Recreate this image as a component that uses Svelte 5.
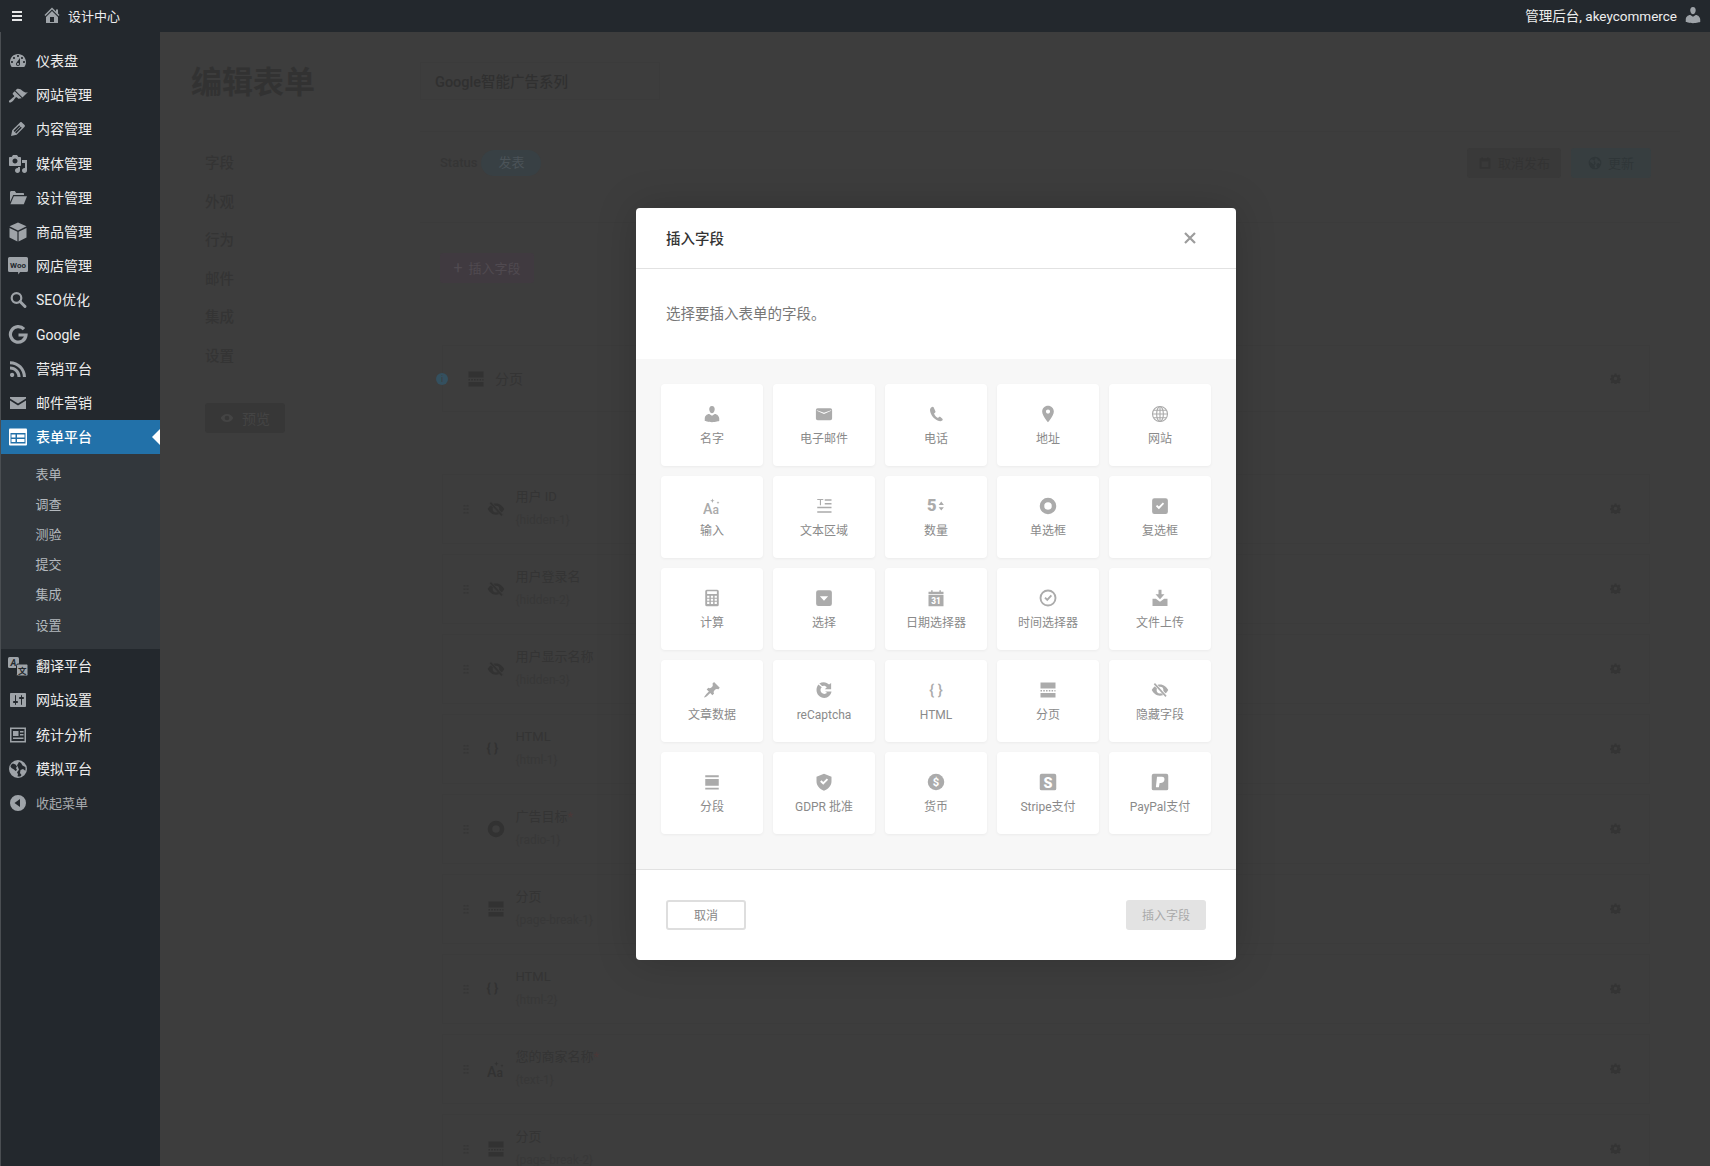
<script>
  const ic = {
    dashboard: [20, '<path fill-rule="evenodd" d="M3.76 16h12.48c1.1-1.37 1.76-3.11 1.76-5 0-4.42-3.58-8-8-8s-8 3.58-8 8c0 1.89.66 3.63 1.76 5zM10 4c.55 0 1 .45 1 1s-.45 1-1 1-1-.45-1-1 .45-1 1-1zM6 6c.55 0 1 .45 1 1s-.45 1-1 1-1-.45-1-1 .45-1 1-1zm8 0c.55 0 1 .45 1 1s-.45 1-1 1-1-.45-1-1 .45-1 1-1zm-5.37 5.55L12 7v6c0 1.1-.9 2-2 2s-2-.9-2-2c0-.57.24-1.08.63-1.45zM4 10c.55 0 1 .45 1 1s-.45 1-1 1-1-.45-1-1 .45-1 1-1zm12 0c.55 0 1 .45 1 1s-.45 1-1 1-1-.45-1-1 .45-1 1-1zm-5 3c0-.55-.45-1-1-1s-1 .45-1 1 .45 1 1 1 1-.45 1-1z"/>'],
    brush: [20, '<path d="M14.48 11.06L7.41 3.99l1.5-1.5c.5-.56 2.3-.47 3.51.32 1.21.8 1.43 1.28 2.91 2.1 1.18.64 2.45 1.26 4.45.85zm-.71.71L6.7 4.7 4.93 6.47c-.39.39-.39 1.02 0 1.41l1.06 1.06c.39.39.39 1.03 0 1.42-.6.6-1.43 1.11-2.21 1.69-.35.26-.7.53-1.01.84C1.43 13.23.4 14.98 1.2 15.8c.8.81 2.57-.23 3.92-1.58.31-.31.58-.66.85-1.02.57-.78 1.08-1.61 1.69-2.21.39-.39 1.02-.39 1.41 0l1.06 1.06c.39.39 1.02.39 1.41 0z" transform="translate(0 1.5)"/>'],
    edit: [20, '<path d="M13.89 3.39l2.71 2.72c.46.46.42 1.24.03 1.64l-8.01 8.02-5.56 1.16 1.16-5.58s7.6-7.63 7.99-8.03c.39-.39 1.22-.39 1.68.07zm-2.73 2.79l-5.59 5.61 1.11 1.11 5.54-5.65zm-2.97 8.23l5.58-5.6-1.07-1.08-5.59 5.6z"/>'],
    media: [20, '<path d="M13 11V4c0-.55-.45-1-1-1h-1.67L9 1H5L3.67 3H2c-.55 0-1 .45-1 1v7c0 .55.45 1 1 1h10c.55 0 1-.45 1-1zM7 4.5c1.38 0 2.5 1.12 2.5 2.5S8.38 9.5 7 9.5 4.5 8.38 4.5 7 5.62 4.5 7 4.5zM14 6h5v10.5c0 1.38-1.12 2.5-2.5 2.5S14 17.88 14 16.5s1.12-2.5 2.5-2.5c.17 0 .34.02.5.05V9h-3V6zm-4 8.05V13h2v3.5c0 1.38-1.12 2.5-2.5 2.5S7 17.88 7 16.5 8.12 14 9.5 14c.17 0 .34.02.5.05z"/>'],
    folder: [20, '<path d="M2 4.5C2 3.7 2.6 3 3.4 3h3.4l1.4 2H15c.6 0 1 .4 1 1v1H5.2L2 14z"/><path d="M5.8 8.2H19l-3.2 8H2.4z"/>'],
    box: [20, '<path d="M10 .5l8.500 3.800L10 8.400 1.500 4.300zM1.500 6l7.900 3.800V19.500L1.500 15.500zM18.500 6v9.500l-7.900 4V9.800z"/>'],
    woo: [20, '<path d="M1.500 1h17a1.500 1.500 0 0 1 1.500 1.500v12a1.500 1.500 0 0 1-1.500 1.500h-6.500l-1.500 2.500-.5-2.500h-8.500a1.500 1.500 0 0 1-1.500-1.500v-12a1.500 1.500 0 0 1 1.500-1.500z"/><text x="10" y="11.500" text-anchor="middle" font-size="8" font-weight="700" font-family="Roboto" fill="#23282d">Woo</text>'],
    search: [20, '<circle cx="8.500" cy="8" r="4.800" fill="none" stroke="currentColor" stroke-width="2.200"/><path d="M12 11.500l5 5" stroke="currentColor" stroke-width="3" stroke-linecap="round"/>'],
    google: [20, '<path d="M16 5.100A7.800 7.800 0 1 0 18 11H10.500" fill="none" stroke="currentColor" stroke-width="3.200"/>'],
    rss: [20, '<path d="M14.92 18H18C18 9.32 10.82 2.25 2 2.25v3.02c7.12 0 12.92 5.71 12.92 12.73zm-5.44 0h3.08C12.56 12.27 7.82 7.6 2 7.6v3.02c2 0 3.87.77 5.29 2.16C8.7 14.17 9.48 16.03 9.48 18zm-5.35-.02c1.17 0 2.13-.93 2.13-2.09 0-1.15-.96-2.09-2.13-2.09-1.18 0-2.13.94-2.13 2.09 0 1.16.95 2.09 2.13 2.09z"/>'],
    mailbar: [20, '<path d="M2 4h16v1.500l-8 5-8-5zM2 7.500l8 5 8-5V16H2z"/>'],
    form: [20, '<rect x="1" y="1.500" width="18" height="17" rx="1" fill="#fff"/><rect x="2.500" y="6" width="15" height="10.500" fill="#2271a9"/><path d="M3.500 7.500h4v3h-4zM3.500 12h4v3h-4zM9 7.500h7.500v3H9zM9 12h7.500v3H9z" fill="#fff"/>'],
    translate: [20, '<rect x="0" y="1" width="11" height="11" rx="1.500"/><text x="5.500" y="9.500" text-anchor="middle" font-size="9" font-weight="700" font-style="italic" font-family="Roboto" fill="#23282d">A</text><rect x="8.500" y="8" width="11.500" height="12" rx="1.500" stroke="#23282d"/><text x="14.200" y="17.500" text-anchor="middle" font-size="8.500" font-family="Noto Sans CJK SC" font-weight="700" fill="#23282d">文</text>'],
    settings: [20, '<path d="M18 16V4c0-.55-.45-1-1-1H3c-.55 0-1 .45-1 1v12c0 .55.45 1 1 1h14c.55 0 1-.45 1-1zM8 11h1c.55 0 1 .45 1 1s-.45 1-1 1H8v1.500c0 .28-.22.5-.5.5s-.5-.22-.5-.5V13H6c-.55 0-1-.45-1-1s.45-1 1-1h1V5.500c0-.28.22-.5.5-.5s.5.22.5.5V11zm5-2h-1c-.55 0-1-.45-1-1s.45-1 1-1h1V5.500c0-.28.22-.5.5-.5s.5.22.5.5V7h1c.55 0 1 .45 1 1s-.45 1-1 1h-1v5.500c0 .28-.22.5-.5.5s-.5-.22-.5-.5V9z"/>'],
    stats: [20, '<path fill-rule="evenodd" d="M2 2.500h16v15H2zM3.500 4v12h13V4z"/><path d="M5 6h5.500v5H5zM12 6h3.500v1.500H12zM12 9h3.500v1.500H12zM5 12.500h10.500V14H5z"/>'],
    globeFill: [20, '<path fill-rule="evenodd" d="M10 1a9 9 0 1 0 0 18 9 9 0 0 0 0-18zM5 4.500l2.500 1 1.500 2-1 1.500 1 2-1.500 1-1.500-1.500-2.500-1.500-1-1.500C2.600 6.200 3.600 5.300 5 4.500zm6-1.800l2 1.300 1.500 2.500 2.800 1.500c.3 1 .3 2.500 0 3.700l-2.300-1.700-2.500 1-.5 3 1.500 2-1 1.300c-1 .3-2 .3-3 0l.5-2-1-2 2-2.500-1-2.500-1-2 1-1.500z"/>'],
    collapse: [20, '<path fill-rule="evenodd" d="M10 2a8 8 0 1 0 0 16 8 8 0 0 0 0-16zm2 4v8L6.500 10z"/>'],
    home: [20, '<path d="M16 8.500l1.530 1.530-1.060 1.060L10 4.620l-6.470 6.470-1.060-1.060L10 2.500l4 4v-2h2v4zm-6-2.460l6 5.990V18H4v-5.970zM12 17v-5H8v5h4z"/>'],
    user: [20, '<path d="M10 9.250c-2.270 0-2.730-3.440-2.730-3.440C7 4.020 7.820 2 9.970 2c2.160 0 2.980 2.020 2.710 3.810 0 0-.410 3.440-2.680 3.440zm0 2.570L12.720 10c2.390 0 4.520 2.330 4.520 4.530v2.490s-3.650 1.130-7.240 1.130c-3.650 0-7.240-1.130-7.240-1.130v-2.490c0-2.250 1.940-4.480 4.470-4.480z"/>'],
    mail: [20, '<path fill-rule="evenodd" d="M3 3.500h14a2 2 0 0 1 2 2V15a2 2 0 0 1-2 2H3a2 2 0 0 1-2-2V5.500a2 2 0 0 1 2-2zM2 6.500l8 3.500 8-3.500V5.800l-8 2.700-8-2.700z"/>'],
    phone: [24, '<path d="M7 2.500c-1.500.4-3 1.800-3 4C4.500 13.500 10 20 17.500 21.500c1.500.2 2.800-.6 3.300-1.500.3-.6.2-1.300-.3-1.700l-3-2.500c-.5-.4-1.200-.3-1.600.1l-1.200 1.300c-2.500-1.200-4.300-3.400-5.300-6l1.500-1.200c.5-.4.600-1 .4-1.500L9 3.200c-.3-.6-1.200-.9-2-.7z"/>'],
    pinmap: [24, '<path d="M12 2C8.130 2 5 5.130 5 9c0 5.250 7 13 7 13s7-7.750 7-13c0-3.870-3.130-7-7-7zm0 9.500c-1.380 0-2.500-1.120-2.500-2.500s1.120-2.500 2.500-2.500 2.500 1.120 2.500 2.500-1.120 2.500-2.500 2.500z"/>'],
    globe: [24, '<g fill="none" stroke="currentColor" stroke-width="1.500"><circle cx="12" cy="12" r="10"/><ellipse cx="12" cy="12" rx="4.500" ry="10"/><path d="M2 12h20M3.300 7h17.400M3.300 17h17.400M12 2v20"/></g>'],
    aa: [24, '<text x="0" y="22" font-size="19" font-weight="500" font-family="Roboto">A</text><text x="12.500" y="22" font-size="16" font-weight="500" font-family="Roboto">a</text><path d="M12.500 2l.8 2.200 2.200.8-2.200.8-.8 2.200-.8-2.200-2.200-.8 2.200-.8zM20 5.500l.6 1.400 1.400.6-1.400.6-.6 1.400-.6-1.400-1.400-.6 1.400-.6z"/>'],
    textarea: [24, '<path d="M3 2.500h8v1.500H8v7H6.500V4H3zM13 3h9v2h-9zM13 8h9v2h-9zM3 13h19v2H3zM3 19h19v2H3z"/>'],
    number: [24, '<text x="0" y="19" font-size="22" font-weight="900" font-family="Roboto">5</text><path d="M15.500 10.500l3.500-4.500 3.500 4.500zM15.500 13.500l3.500 4.500 3.500-4.500z"/>'],
    radio: [24, '<path fill-rule="evenodd" d="M12 1a11 11 0 1 0 0 22 11 11 0 0 0 0-22zm0 6a5 5 0 1 1 0 10 5 5 0 0 1 0-10z"/>'],
    check: [24, '<path fill-rule="evenodd" d="M4.500 1.500h15a3 3 0 0 1 3 3v15a3 3 0 0 1-3 3h-15a3 3 0 0 1-3-3v-15a3 3 0 0 1 3-3zM6.500 12.300l4 4 7-7.300-1.700-1.600-5.300 5.400-2.300-2.200z"/>'],
    calc: [24, '<path fill-rule="evenodd" d="M5 1h14a2 2 0 0 1 2 2v18a2 2 0 0 1-2 2H5a2 2 0 0 1-2-2V3a2 2 0 0 1 2-2zM5.500 3v3.500h13V3zM5.500 9v2.500h3V9zm5 0v2.500h3V9zm5 0v2.500h3V9zm-10 4v2.500h3V13zm5 0v2.500h3V13zm5 0v2.500h3V13zm-10 4v3h3v-3zm5 0v3h3v-3zm5 0v3h3v-3z"/>'],
    select: [24, '<path fill-rule="evenodd" d="M4.500 1.500h15a3 3 0 0 1 3 3v15a3 3 0 0 1-3 3h-15a3 3 0 0 1-3-3v-15a3 3 0 0 1 3-3zM6.500 9.500l5.500 6 5.500-6z"/>'],
    date: [24, '<path d="M2 3.500h3.500V1.500h2v2h9v-2h2v2H22V7H2z"/><path d="M2 8h20v15H2z"/><text x="12" y="20.500" text-anchor="middle" font-size="11" font-weight="900" font-family="Roboto" fill="#fff">31</text>'],
    clock: [24, '<g fill="none" stroke="currentColor"><circle cx="12" cy="12" r="10" stroke-width="2.500"/><path d="M8 11.500l3 3 5.500-6" stroke-width="2.500"/></g>'],
    upload: [24, '<path d="M10 1h4v6h4l-6 6.500L6 7h4z"/><path d="M2 13h4.500l5.500 4 5.500-4H22v9.500H2z"/>'],
    pin: [20, '<path d="M10.440 3.020l1.820-1.820 6.360 6.350-1.830 1.820c-1.050-.680-2.480-.570-3.410.360l-.750.750c-.920.930-1.040 2.350-.350 3.410l-1.830 1.820-2.410-2.410-2.800 2.790c-.420.420-3.380 2.710-3.800 2.290s1.860-3.390 2.280-3.810l2.790-2.790L4.100 9.360l1.830-1.820c1.050.69 2.480.57 3.400-.36l.75-.75c.93-.92 1.05-2.350.36-3.41z"/>'],
    recaptcha: [24, '<path d="M11.500 1.500c3 0 5.500 1.200 7.200 3.300l2.800-2.300v8.500h-8.500l2.800-2.800c-1-1.200-2.500-2-4.100-2-1 0-1.700.3-2.300.6L5.800 3.300c1.700-1.200 3.600-1.800 5.700-1.800z"/><path d="M4.500 4.500L9 8.200C7.900 9.200 7.300 10.500 7.300 12c0 2.900 2.300 5.200 5.200 5.200 1.500 0 2.700-.6 3.500-1.500l-2.500-1.800H22c-.6 4.800-4.800 8.600-9.500 8.600C6.500 22.500 2 17.800 2 12c0-2.900 1-5.500 2.500-7.500z"/>'],
    pagebreak: [24, '<path d="M2 2h20v8H2zM2 16h20v6H2z"/><path d="M2 13h20" stroke="currentColor" stroke-width="2" stroke-dasharray="2 1.700"/>'],
    hidden: [24, '<path fill-rule="evenodd" d="M12 4.500c5 0 9 3.500 11 7.500-2 4-6 7.500-11 7.500S3 16 1 12c2-4 6-7.500 11-7.500zm0 3a4.500 4.500 0 1 0 0 9 4.500 4.500 0 0 0 0-9z"/><path d="M4 3l17 18" style="stroke:var(--cut,#fff)" stroke-width="4"/><path d="M4.500 3.500l15.500 17" stroke="currentColor" stroke-width="2.200"/>'],
    section: [24, '<path d="M3 3h18v2.500H3zM3 8h18v9H3zM3 19.500h18V22H3z"/>'],
    gdpr: [24, '<path fill-rule="evenodd" d="M12 1l10 4v6c0 6-4.300 10.500-10 12.500C6.300 21.500 2 17 2 11V5zM6.800 11.500L11 15.700l6.500-6.700-1.800-1.700-4.700 4.800-2.400-2.300z"/>'],
    money: [24, '<circle cx="12" cy="12" r="11"/><text x="12" y="17.500" text-anchor="middle" font-size="15" font-weight="700" font-family="Roboto" fill="#fff">$</text>'],
    stripe: [24, '<rect x="1" y="1" width="22" height="22" rx="2.500"/><text x="12" y="19.500" text-anchor="middle" font-size="19" font-weight="900" font-family="Roboto" fill="#fff">S</text>'],
    paypal: [24, '<rect x="1" y="1" width="22" height="22" rx="2.500"/><path d="M8 5h6.500c3 0 4 2.200 3.300 4.700-.6 2.300-2.500 3.500-4.800 3.500h-1.500L10.500 19H6.500z" fill="#fff"/>'],
    eye: [24, '<path fill-rule="evenodd" d="M12 5c5 0 9 3 11 7-2 4-6 7-11 7S3 16 1 12c2-4 6-7 11-7zm0 3a4 4 0 1 0 0 8 4 4 0 0 0 0-8z"/>'],
    cal: [24, '<path d="M3 4h3V2h2v2h8V2h2v2h3v18H3zM6 9v10h12V9z"/>'],
    gear: [24, '<path fill-rule="evenodd" d="M10 1h4l.7 3.200 2.400 1L20 3.500 22.500 6.500 20.800 9l1 2.400 2.200.6v3l-2.200.6-1 2.400 1.700 2.500L20 23l-2.900-1.700-2.400 1L14 24h-4l-.7-1.700-2.400-1L4 23l-2.500-2.500L3.200 18l-1-2.400-2.200-.6v-3l2.200-.6 1-2.400-1.700-2.500L4 3.500l2.900 1.700 2.400-1zM12 8a4 4 0 1 0 0 8 4 4 0 0 0 0-8z"/>']
  };

  const menuTop = [
    ['dashboard', '仪表盘'], ['brush', '网站管理'], ['edit', '内容管理'], ['media', '媒体管理'],
    ['folder', '设计管理'], ['box', '商品管理'], ['woo', '网店管理'], ['search', 'SEO优化'],
    ['google', 'Google'], ['rss', '营销平台'], ['mailbar', '邮件营销']
  ];
  const subMenu = ['表单', '调查', '测验', '提交', '集成', '设置'];
  const menuBottom = [['translate', '翻译平台'], ['settings', '网站设置'], ['stats', '统计分析'], ['globeFill', '模拟平台']];
  const tabs = ['字段', '外观', '行为', '邮件', '集成', '设置'];
  const rows = [
    ['hidden', '用户 ID', '{hidden-1}', false], ['hidden', '用户登录名', '{hidden-2}', false],
    ['hidden', '用户显示名称', '{hidden-3}', false], ['braces', 'HTML', '{html-1}', false],
    ['radio', '广告目标', '{radio-1}', true], ['pagebreak', '分页', '{page-break-1}', false],
    ['braces', 'HTML', '{html-2}', false], ['aa', '您的商家名称', '{text-1}', true],
    ['pagebreak', '分页', '{page-break-2}', false]
  ];
  const fields = [
    ['user', '名字'], ['mail', '电子邮件'], ['phone', '电话'], ['pinmap', '地址'], ['globe', '网站'],
    ['aa', '输入'], ['textarea', '文本区域'], ['number', '数量'], ['radio', '单选框'], ['check', '复选框'],
    ['calc', '计算'], ['select', '选择'], ['date', '日期选择器'], ['clock', '时间选择器'], ['upload', '文件上传'],
    ['pin', '文章数据'], ['recaptcha', 'reCaptcha'], ['braces', 'HTML'], ['pagebreak', '分页'], ['hidden', '隐藏字段'],
    ['section', '分段'], ['gdpr', 'GDPR 批准'], ['money', '货币'], ['stripe', 'Stripe支付'], ['paypal', 'PayPal支付']
  ];
</script>

{#snippet icon(name, cls)}
  {#if name === 'braces'}
    <span class="braces {cls}">{'{ }'}</span>
  {:else}
    <svg class="{cls} n-{name}" viewBox="0 0 {ic[name][0]} {ic[name][0]}" fill="currentColor" aria-hidden="true">{@html ic[name][1]}</svg>
  {/if}
{/snippet}

<div class="page">
  <header class="topbar">
    <div class="burger"><i></i><i></i><i></i></div>
    {@render icon('home', 'home-ic')}
    <span class="site">设计中心</span>
    <span class="grow"></span>
    <span class="greet">管理后台, akeycommerce</span>
    {@render icon('user', 'user-ic')}
  </header>

  <div class="shell">
    <nav class="side">
      <ul class="menu">
        {#each menuTop as [i, label]}
          <li class="item">{@render icon(i, 'side-ic')}<span class:latin={label === 'Google'}>{label}</span></li>
        {/each}
        <li class="item active">{@render icon('form', 'side-ic')}<span>表单平台</span></li>
      </ul>
      <ul class="sub">
        {#each subMenu as s}<li>{s}</li>{/each}
      </ul>
      <ul class="menu after">
        {#each menuBottom as [i, label]}
          <li class="item">{@render icon(i, 'side-ic')}<span>{label}</span></li>
        {/each}
        <li class="item collapse">{@render icon('collapse', 'side-ic')}<span>收起菜单</span></li>
      </ul>
    </nav>

    <main class="main">
      <div class="head">
        <h1>编辑表单</h1>
        <div class="name">Google智能广告系列</div>
      </div>
      <div class="content">
        <aside class="tabs">
          {#each tabs as t}<div class="tab">{t}</div>{/each}
          <div class="preview">{@render icon('eye', 'btn-ic')}预览</div>
        </aside>
        <section class="panel">
          <div class="toolbar">
            <span class="status">Status</span>
            <span class="pill">发表</span>
            <span class="grow"></span>
            <span class="tbtn">{@render icon('cal', 'btn-ic')}取消发布</span>
            <span class="tbtn update">{@render icon('globeFill', 'btn-ic')}更新</span>
          </div>
          <div class="add"><span class="plus">+</span>插入字段</div>
          <div class="first">
            <span class="info">i</span>
            {@render icon('pagebreak', 'row-ic')}
            <span class="first-t">分页</span>
            <span class="grow"></span>
            {@render icon('gear', 'gear')}
          </div>
          <div class="rows">
            {#each rows as [i, title, key, req]}
              <div class="row">
                <span class="grip"></span>
                <span class="row-icw">{@render icon(i, 'row-ic')}</span>
                <div class="row-txt">
                  <div class="row-t">{title}{#if req}<em> *</em>{/if}</div>
                  <div class="row-k">{key}</div>
                </div>
                <span class="grow"></span>
                {@render icon('gear', 'gear')}
              </div>
            {/each}
          </div>
        </section>
      </div>
    </main>
  </div>

  <div class="modal">
    <div class="m-head">
      <h2>插入字段</h2>
      <svg class="close" viewBox="0 0 12 12" aria-hidden="true"><path d="M1 1l10 10M11 1L1 11" stroke="currentColor" stroke-width="2.200"/></svg>
    </div>
    <p class="m-desc">选择要插入表单的字段。</p>
    <div class="m-grid">
      {#each fields as [i, label]}
        <div class="card">
          <span class="card-ic">{@render icon(i, 'f-ic')}</span>
          <span class="card-l">{label}</span>
        </div>
      {/each}
    </div>
    <div class="m-foot">
      <span class="cancel">取消</span>
      <span class="insert">插入字段</span>
    </div>
  </div>
</div>

<style>
  :global(body) {
    margin: 0;
    background: #3d3d3d;
    font-family: Roboto, "Noto Sans CJK SC", sans-serif;
  }
  ul { list-style: none; margin: 0; padding: 0; }
  .grow { flex: 1; }
  .page { position: relative; width: 1710px; height: 1166px; overflow: hidden; }

  .topbar {
    height: 32px; display: flex; align-items: center; background: #23282d; color: #eee;
    font-size: 13px; padding: 0 7px 0 12px; box-sizing: border-box;
  }
  .burger { display: flex; flex-direction: column; gap: 2px; width: 10px; margin-right: 20px; }
  .burger i { display: block; height: 2px; background: #e6e7e8; }
  :global(.home-ic) { width: 20px; height: 20px; color: #9ea3a8; margin: -2px 6px 0 0; }
  .site, .greet { margin-top: -2px; }
  .greet { margin-right: 6px; font-size: 13.500px; }
  :global(.user-ic) { width: 20px; height: 20px; color: #9ea3a8; margin-top: -2px; }

  .shell { display: flex; height: 1134px; }
  .side { width: 160px; flex: none; background: #23282d; box-sizing: border-box; border-left: 1px solid #4a4e52; padding-top: 12px; }
  .item {
    height: 34.18px; display: flex; align-items: center; color: #eee; font-size: 14px;
    padding-left: 7px; box-sizing: border-box; position: relative;
  }
  .item span { margin: -2px 0 0 8px; }
  .item span.latin { margin-top: 1px; }
  .item.collapse span { margin-top: 0; }
  :global(.side-ic) { width: 20px; height: 20px; color: #9ea3a8; flex: none; }
  .active { background: #2271a9; color: #fff; font-weight: 500; }
  .active::after {
    content: ""; position: absolute; right: 0; top: 50%; margin-top: -8px;
    border: 8px solid transparent; border-right-color: #fff; border-left-width: 0;
  }
  .sub { background: #32373c; padding: 6px 0 8.500px; }
  .sub li { height: 30.100px; line-height: 30.100px; padding-left: 34.500px; font-size: 13px; color: #b4b9be; }
  .collapse { color: #a8abae; font-size: 13px; }

  .main { flex: 1; min-width: 0; padding: 30px 30px 0 31px; color: #343434; box-sizing: border-box; }
  .head { display: flex; align-items: center; height: 38px; }
  h1 { margin: 3px 0 0; width: 229px; font-size: 31px; font-weight: 700; color: #323232; line-height: 38px; }
  .name {
    width: 240px; height: 38px; line-height: 39px; box-sizing: border-box; padding-left: 14px;
    font-size: 14.500px; font-weight: 500; color: #303030; border: 1px solid #3b3b3b;
  }
  .content { display: grid; grid-template-columns: 229px 1fr; margin-top: 31px; }
  .tabs { padding: 14px 0 0 14px; }
  .tab { height: 38.500px; line-height: 38.500px; font-size: 14.500px; font-weight: 500; color: #343434; }
  .preview {
    width: 80px; height: 30px; margin-top: 27px; background: #373737; border-radius: 3px; color: #444;
    font-size: 14px; display: flex; align-items: center; justify-content: center; gap: 8px;
  }
  :global(.btn-ic) { width: 14px; height: 14px; }
  .panel { min-width: 0; }
  .toolbar {
    display: flex; align-items: center; height: 92px; box-sizing: border-box; padding: 0 29px 29px 20px;
    border-top: 1px solid #3b3b3b; border-bottom: 1px solid #3b3b3b; font-size: 13px;
  }
  .status { color: #353535; font-weight: 500; margin-right: 4px; }
  .pill { width: 60px; height: 26px; line-height: 26px; text-align: center; border-radius: 13px; background: #384044; color: #4b5358; font-size: 13px; }
  .tbtn {
    height: 30px; width: 94px; display: flex; align-items: center; justify-content: center; gap: 6px;
    background: #393939; border-radius: 3px; color: #333; font-size: 13px;
  }
  .update { width: 80px; margin-left: 10px; background: #373e40; color: #2f3638; }
  .add {
    width: 94px; height: 30px; margin: 30px 0 0 20px; background: #403a40; border-radius: 3px; color: #504a50;
    font-size: 13px; display: flex; align-items: center; justify-content: center; gap: 6px; padding-bottom: 1px; box-sizing: border-box;
  }
  .plus { font-size: 16px; }
  .first {
    height: 67px; margin: 62px 30px 0 22px; display: flex; align-items: center; position: relative;
    border: 1px solid #3b3b3b; box-sizing: border-box; padding-left: 24px; padding-right: 28px;
  }
  .info {
    position: absolute; left: -7px; top: 27px; width: 12px; height: 12px; border-radius: 50%;
    background: #34505f; color: #3d3d3d; font-size: 9px; line-height: 12px; text-align: center;
  }
  :global(.row-ic) { width: 18px; height: 18px; color: #323232; flex: none; }
  .first-t { margin: -2px 0 0 10px; font-size: 14px; color: #343434; }
  :global(.gear) { width: 11px; height: 11px; color: #343434; }
  .rows { margin-top: 61.500px; --cut: #3d3d3d; }
  .row {
    height: 70px; margin: 0 30px 10px 22px; display: flex; align-items: center; box-sizing: border-box;
    border: 1px solid #3b3b3b; padding-right: 28px;
  }
  .grip {
    width: 6px; height: 10px; margin-left: 20px; flex: none;
    background-image: radial-gradient(circle, #363636 1px, transparent 1.200px);
    background-size: 3px 3.500px;
  }
  .row-icw { width: 18px; margin-left: 17.500px; display: flex; justify-content: center; }
  .braces { font-size: 13px; font-weight: 700; color: #323232; white-space: nowrap; }
  .row-txt { margin-left: 11px; }
  .row-t { font-size: 13px; line-height: 18px; color: #343434; }
  .row-t em { color: #4a3838; font-style: normal; }
  .row-k { font-size: 12px; line-height: 18px; margin-top: 5px; color: #383838; }

  .modal {
    position: absolute; left: 636px; top: 208px; width: 600px; height: 752px; background: #fff;
    border-radius: 4px; box-shadow: 0 0 40px rgba(0,0,0,.18); overflow: hidden; display: flex; flex-direction: column;
  }
  .m-head {
    height: 58px; flex: none; display: flex; align-items: center; justify-content: space-between;
    padding: 0 40px 2px 30px; border-bottom: 1px solid #e2e2e2;
  }
  h2 { margin: 0; font-size: 14.500px; font-weight: 500; color: #333; }
  .close { width: 12px; height: 12px; color: #9c9c9c; margin-top: 2px; }
  .m-desc { margin: 0; height: 90px; line-height: 92px; padding-left: 30px; font-size: 14.500px; color: #777; flex: none; }
  .m-grid {
    flex: none; height: 511px; box-sizing: border-box; background: #f7f7f7; border-bottom: 1px solid #e2e2e2;
    padding: 25px 25px 0; display: grid; grid-template-columns: repeat(5, 102px); grid-auto-rows: 82px; gap: 10px;
  }
  .card {
    background: #fff; border-radius: 4px; box-shadow: 0 1px 3px rgba(0,0,0,.05);
    display: flex; flex-direction: column; align-items: center; padding-top: 21px; box-sizing: border-box;
  }
  .card-ic { height: 18px; display: flex; align-items: center; justify-content: center; color: #ababab; }
  :global(.f-ic) { width: 18px; height: 18px; color: #ababab; flex: none; }
  :global(.f-ic.n-user), :global(.f-ic.n-pinmap) { width: 20px; height: 20px; }
  .card .braces { color: #ababab; font-weight: 500; font-size: 15px; width: auto; height: auto; }
  .card-l { margin-top: 8px; font-size: 12px; line-height: 16px; color: #8a8a8a; }
  .m-foot { flex: 1; display: flex; align-items: center; justify-content: space-between; padding: 0 30px; }
  .cancel, .insert {
    height: 30px; border-radius: 3px; box-sizing: border-box; display: flex; align-items: center; justify-content: center;
    font-size: 12px; padding-bottom: 2px;
  }
  .cancel { width: 80px; border: 2px solid #dedede; color: #888; }
  .insert { width: 80px; background: #e3e3e3; color: #aaa; }
</style>
